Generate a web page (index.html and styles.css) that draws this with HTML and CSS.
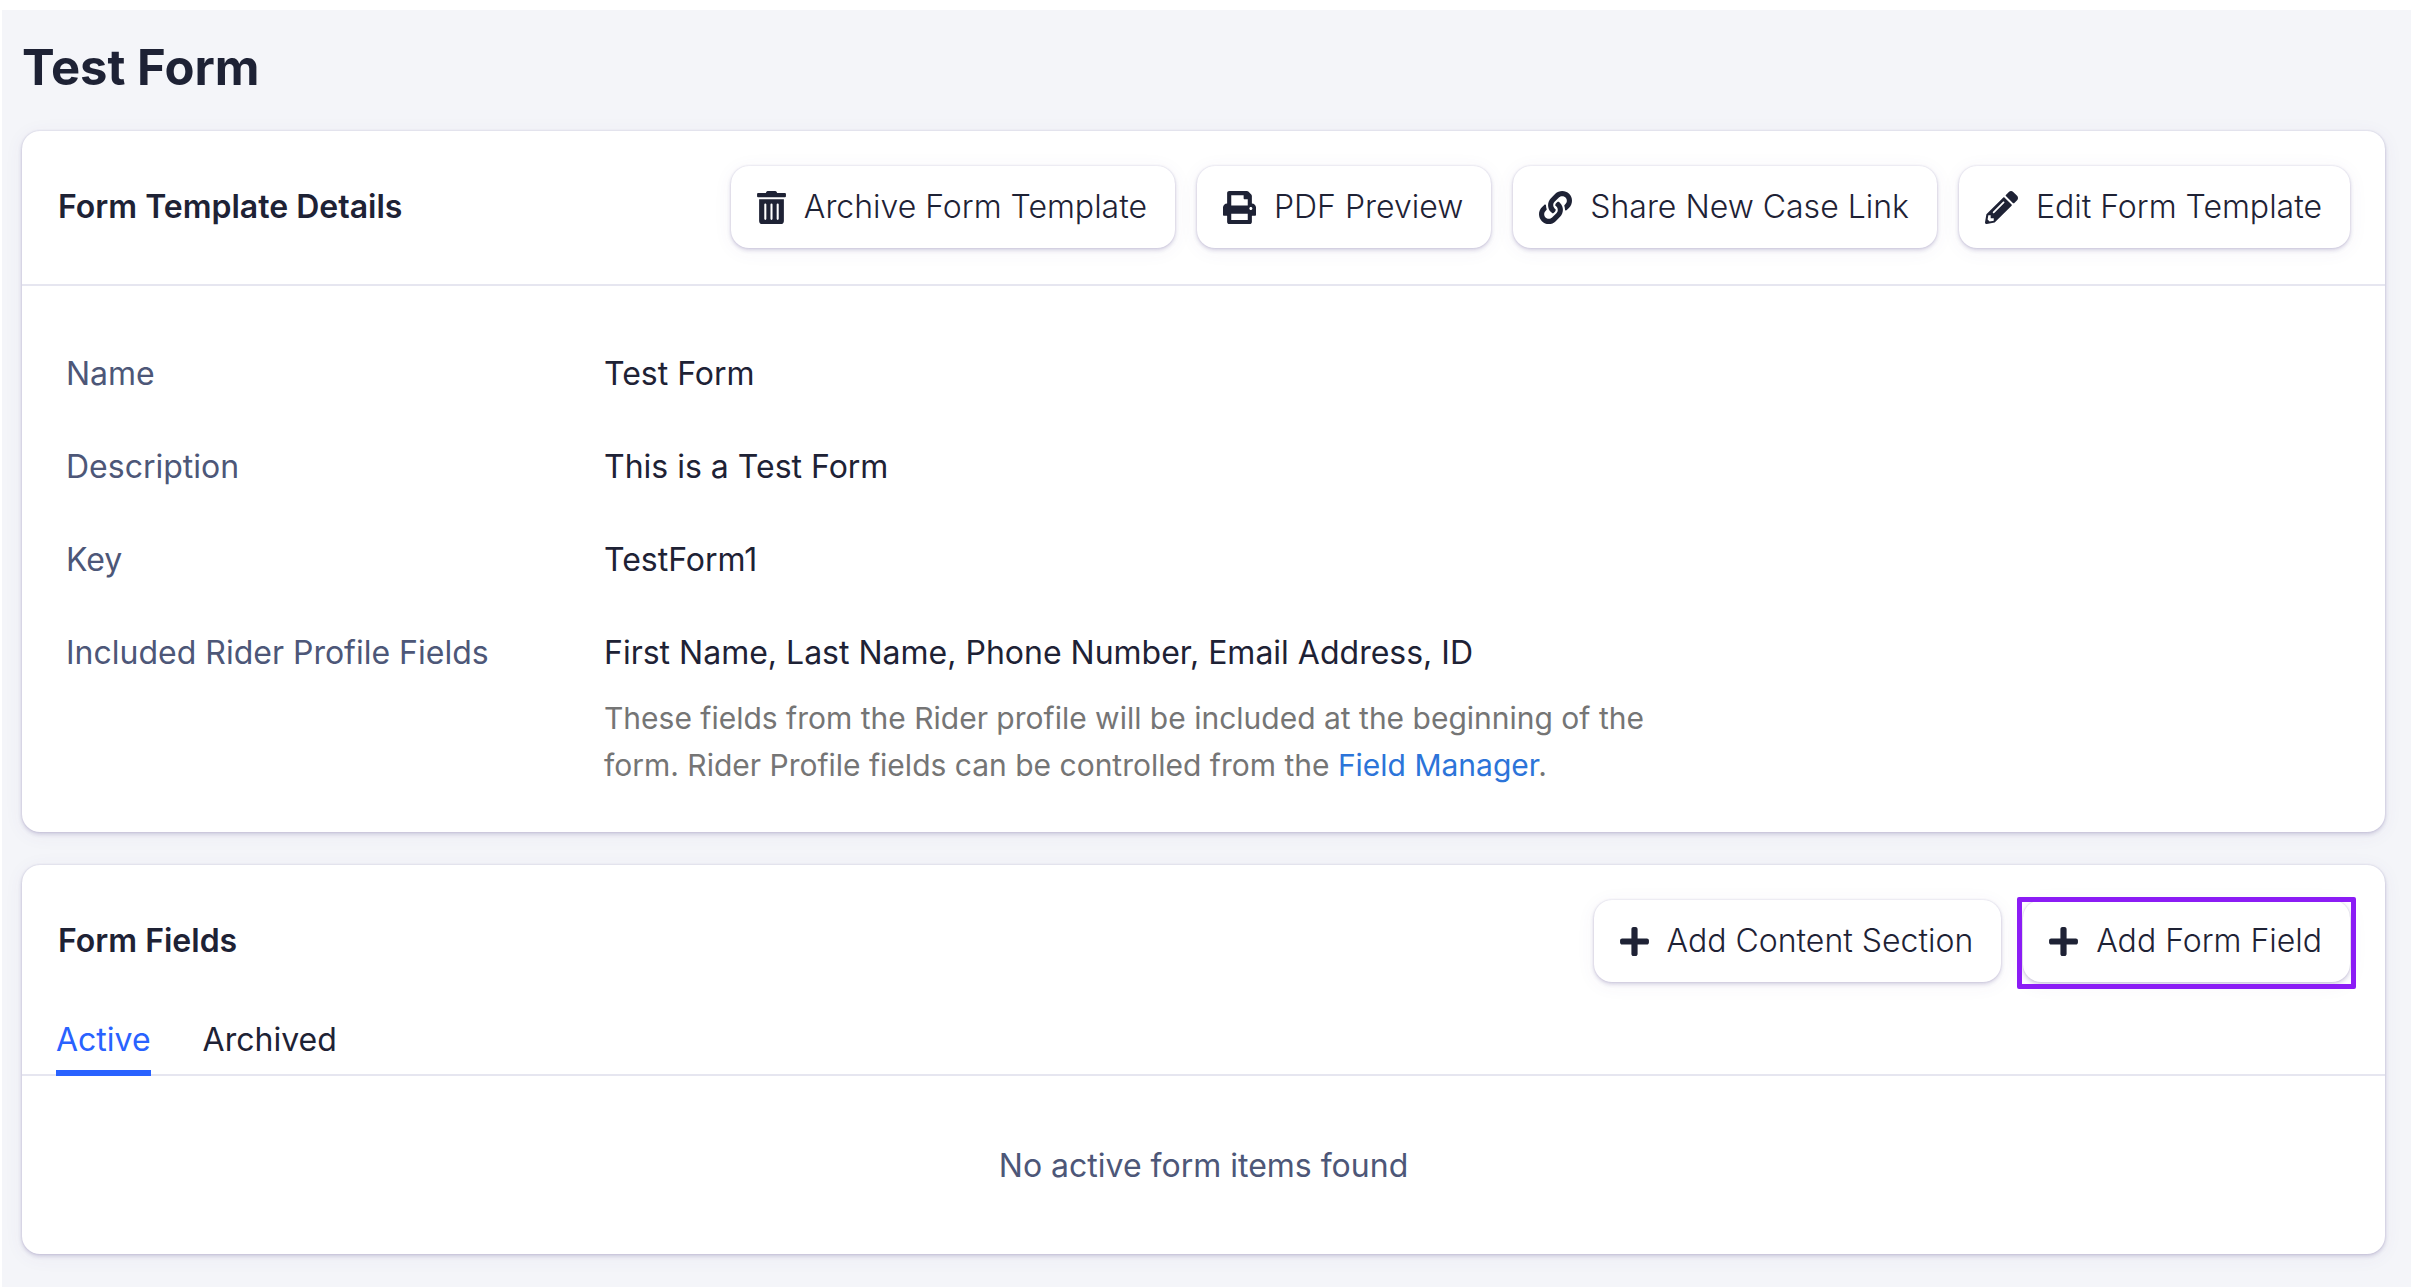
FILE: index.html
```html
<!DOCTYPE html>
<html lang="en">
<head>
  <meta charset="utf-8">
  <meta name="viewport" content="width=device-width, initial-scale=1">
  <title>Test Form</title>
  <link rel="stylesheet" href="styles.css">
</head>
<body>
  <main class="page">
    <h1 class="page-title">Test Form</h1>

    <section class="card">
      <header class="card-header card-header-ruled">
        <h2 class="card-title">Form Template Details</h2>
        <div class="actions">
          <button type="button" class="btn">
            <svg class="icon icon-narrow" viewBox="0 0 448 512" aria-hidden="true"><path d="M32 464a48 48 0 0 0 48 48h288a48 48 0 0 0 48-48V128H32zm272-256a16 16 0 0 1 32 0v224a16 16 0 0 1-32 0zm-96 0a16 16 0 0 1 32 0v224a16 16 0 0 1-32 0zm-96 0a16 16 0 0 1 32 0v224a16 16 0 0 1-32 0zM432 32H312l-9.4-18.7A24 24 0 0 0 281.1 0H166.8a23.72 23.72 0 0 0-21.4 13.3L136 32H16A16 16 0 0 0 0 48v32a16 16 0 0 0 16 16h416a16 16 0 0 0 16-16V48a16 16 0 0 0-16-16z"/></svg>
            <span>Archive Form Template</span>
          </button>
          <button type="button" class="btn">
            <svg class="icon" viewBox="0 0 512 512" aria-hidden="true"><path d="M448 192V77.25c0-8.49-3.37-16.62-9.37-22.63L393.37 9.37c-6-6-14.14-9.37-22.63-9.37H96C78.33 0 64 14.33 64 32v160c-35.35 0-64 28.65-64 64v112c0 8.84 7.16 16 16 16h48v96c0 17.67 14.33 32 32 32h320c17.67 0 32-14.33 32-32v-96h48c8.84 0 16-7.16 16-16V256c0-35.35-28.65-64-64-64zm-64 256H128v-96h256v96zm0-224H128V64h192v48c0 8.84 7.16 16 16 16h48v96zm48 72c-13.25 0-24-10.75-24-24 0-13.26 10.75-24 24-24s24 10.74 24 24c0 13.25-10.75 24-24 24z"/></svg>
            <span>PDF Preview</span>
          </button>
          <button type="button" class="btn">
            <svg class="icon" viewBox="0 0 512 512" aria-hidden="true"><path d="M326.612 185.391c59.747 59.809 58.927 155.698.36 214.59-.11.12-.24.25-.36.37l-67.2 67.2c-59.27 59.27-155.699 59.262-214.96 0-59.27-59.26-59.27-155.7 0-214.96l37.106-37.106c9.84-9.84 26.786-3.3 27.294 10.606.648 17.722 3.826 35.527 9.69 52.721 1.986 5.822.567 12.262-3.783 16.612l-13.087 13.087c-28.026 28.026-28.905 73.66-1.155 101.96 28.024 28.579 74.086 28.749 102.325.51l67.2-67.19c28.191-28.191 28.073-73.757 0-101.83-3.701-3.694-7.429-6.564-10.341-8.569a16.037 16.037 0 0 1-6.947-12.606c-.396-10.567 3.348-21.456 11.698-29.806l21.054-21.055c5.521-5.521 14.182-6.199 20.584-1.731a152.482 152.482 0 0 1 20.522 17.197zM467.547 44.449c-59.261-59.262-155.69-59.27-214.96 0l-67.2 67.2c-.12.12-.25.25-.36.37-58.566 58.892-59.387 154.781.36 214.59a152.454 152.454 0 0 0 20.521 17.196c6.402 4.468 15.064 3.789 20.584-1.731l21.054-21.055c8.35-8.35 12.094-19.239 11.698-29.806a16.037 16.037 0 0 0-6.947-12.606c-2.912-2.005-6.64-4.875-10.341-8.569-28.073-28.073-28.191-73.639 0-101.83l67.2-67.19c28.239-28.239 74.3-28.069 102.325.51 27.75 28.3 26.872 73.934-1.155 101.96l-13.087 13.087c-4.35 4.35-5.769 10.79-3.783 16.612 5.864 17.194 9.042 34.999 9.69 52.721.509 13.906 17.454 20.446 27.294 10.606l37.106-37.106c59.271-59.259 59.271-155.699.001-214.959z"/></svg>
            <span>Share New Case Link</span>
          </button>
          <button type="button" class="btn">
            <svg class="icon" viewBox="0 0 512 512" aria-hidden="true"><path d="M497.9 142.1l-46.1 46.1c-4.7 4.7-12.3 4.7-17 0l-111-111c-4.7-4.7-4.7-12.3 0-17l46.1-46.1c18.7-18.7 49.1-18.7 67.9 0l60.1 60.1c18.8 18.7 18.8 49.1 0 67.9zM284.2 99.8L21.6 362.4.4 483.9c-2.9 16.4 11.4 30.6 27.8 27.8l121.5-21.3 262.6-262.6c4.7-4.7 4.7-12.3 0-17l-111-111c-4.8-4.7-12.4-4.7-17.1 0zM124.1 339.9c-5.5-5.5-5.5-14.3 0-19.8l154-154c5.5-5.5 14.3-5.5 19.8 0s5.5 14.3 0 19.8l-154 154c-5.5 5.5-14.3 5.5-19.8 0zM88 424h48v36.3l-64.5 11.3-31.1-31.1L51.7 376H88v48z"/></svg>
            <span>Edit Form Template</span>
          </button>
        </div>
      </header>

      <dl class="details">
        <dt>Name</dt>
        <dd>Test Form</dd>
        <dt>Description</dt>
        <dd>This is a Test Form</dd>
        <dt>Key</dt>
        <dd>TestForm1</dd>
        <dt>Included Rider Profile Fields</dt>
        <dd>
          First Name, Last Name, Phone Number, Email Address, ID
          <p class="hint">These fields from the Rider profile will be included at the beginning of the form. Rider Profile fields can be controlled from the <a href="#field-manager">Field Manager</a>.</p>
        </dd>
      </dl>
    </section>

    <section class="card">
      <header class="card-header">
        <h2 class="card-title">Form Fields</h2>
        <div class="actions">
          <button type="button" class="btn">
            <svg class="icon icon-narrow" viewBox="0 0 448 512" aria-hidden="true"><path d="M416 208H272V64c0-17.67-14.33-32-32-32h-32c-17.67 0-32 14.33-32 32v144H32c-17.67 0-32 14.33-32 32v32c0 17.67 14.33 32 32 32h144v144c0 17.67 14.33 32 32 32h32c17.67 0 32-14.33 32-32V304h144c17.67 0 32-14.33 32-32v-32c0-17.67-14.33-32-32-32z"/></svg>
            <span>Add Content Section</span>
          </button>
          <button type="button" class="btn btn-highlighted">
            <svg class="icon icon-narrow" viewBox="0 0 448 512" aria-hidden="true"><path d="M416 208H272V64c0-17.67-14.33-32-32-32h-32c-17.67 0-32 14.33-32 32v144H32c-17.67 0-32 14.33-32 32v32c0 17.67 14.33 32 32 32h144v144c0 17.67 14.33 32 32 32h32c17.67 0 32-14.33 32-32V304h144c17.67 0 32-14.33 32-32v-32c0-17.67-14.33-32-32-32z"/></svg>
            <span>Add Form Field</span>
          </button>
        </div>
      </header>

      <div class="tabs" role="tablist">
        <button type="button" class="tab tab-active" role="tab" aria-selected="true">Active</button>
        <button type="button" class="tab" role="tab" aria-selected="false">Archived</button>
      </div>

      <p class="empty">No active form items found</p>
    </section>
  </main>
</body>
</html>
```
FILE: styles.css
```css
:root {
  --ink: #1e2235;
  --ink-soft: #4d5778;
  --ink-muted: #757575;
  --line: #e6e6f0;
  --accent: #2962ff;
  --link: #2c74d9;
  --highlight: #8b1cf5;
  --shadow: 0 0 2px rgba(84, 70, 140, 0.2), 0 2px 4px rgba(84, 70, 140, 0.24), 0 3px 20px rgba(84, 70, 140, 0.06);
}

* {
  box-sizing: border-box;
}

body {
  margin: 0;
  padding: 10px 5px 1px 2px;
  background: #fff;
  color: var(--ink);
  font-family: Inter, "Liberation Sans", sans-serif;
  font-size: 32px;
  line-height: 48px;
}

h1,
h2,
p,
dl,
dd {
  margin: 0;
}

.page {
  display: flex;
  flex-direction: column;
  gap: 33px;
  padding: 28px 26px 33px 20px;
  background: #f4f5f9;
}

.page-title {
  font-size: 49px;
  font-weight: 700;
  line-height: 60px;
}

.card {
  background: #fff;
  border-radius: 18px;
  box-shadow: var(--shadow);
}

.card-header {
  display: flex;
  align-items: center;
  justify-content: space-between;
  gap: 22px;
  padding: 35px 35px 34px 36px;
}

.card-header-ruled {
  padding-bottom: 36px;
  border-bottom: 2px solid var(--line);
}

.card-title {
  font-size: 32px;
  font-weight: 600;
}

.actions {
  display: flex;
  flex-wrap: wrap;
  justify-content: flex-end;
  gap: 22px;
}

.btn {
  position: relative;
  display: flex;
  align-items: center;
  gap: 18px;
  padding: 17px 28px 17px 26px;
  border: 0;
  border-radius: 18px;
  background: #fff;
  box-shadow: var(--shadow);
  color: inherit;
  font: inherit;
  font-weight: 300;
  white-space: nowrap;
  cursor: pointer;
}

/* Square marker drawn around the button */
.btn-highlighted::after {
  content: "";
  position: absolute;
  inset: -3px -6px -7px;
  border: 5px solid var(--highlight);
  border-radius: 2px;
}

.icon {
  flex: none;
  width: 33px;
  height: 33px;
  fill: currentColor;
}

.icon-narrow {
  width: 29px;
}

.details {
  display: grid;
  grid-template-columns: 538px 1fr;
  row-gap: 45px;
  padding: 64px 44px 43px;
}

.details dt {
  color: var(--ink-soft);
}

.hint {
  max-width: 1060px;
  margin-top: 18px;
  color: var(--ink-muted);
  font-size: 30px;
  line-height: 47px;
}

.hint a {
  color: var(--link);
  text-decoration: none;
}

.tabs {
  display: flex;
  gap: 52px;
  padding: 0 34px;
  border-bottom: 2px solid var(--line);
}

.tab {
  margin-bottom: -2px;
  padding: 0 0 6px;
  border: 0;
  border-bottom: 6px solid transparent;
  background: none;
  color: inherit;
  font: inherit;
  cursor: pointer;
}

.tab-active {
  border-bottom-color: var(--accent);
  color: var(--accent);
}

.empty {
  padding: 66px 35px 64px;
  color: var(--ink-soft);
  text-align: center;
}
```
